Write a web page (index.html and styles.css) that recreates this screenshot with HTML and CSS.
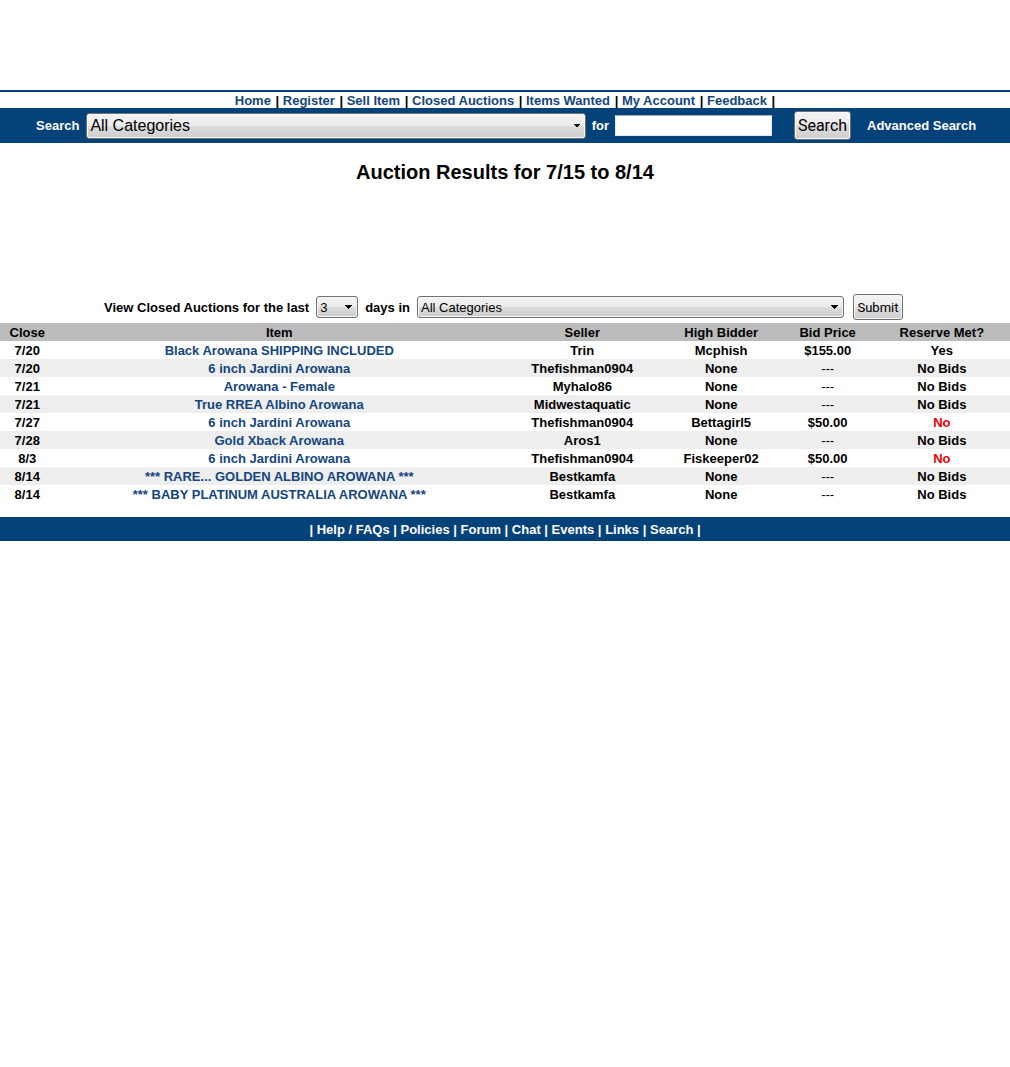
FILE: index.html
```html
<!DOCTYPE html>
<html lang="en">
<head>
<meta charset="utf-8">
<title>Auction Results</title>
<link rel="stylesheet" href="styles.css">
</head>
<body>
<header class="site-header">
  <nav class="top-nav">
    <a href="#">Home</a> | <a href="#">Register</a> | <a href="#">Sell Item</a> | <a href="#">Closed Auctions</a> | <a href="#">Items Wanted</a> | <a href="#">My Account</a> | <a href="#">Feedback</a> |
  </nav>
  <form class="search-bar">
    <label for="category">Search</label>
    <select id="category" class="control search-category"><option>All Categories</option></select>
    <label for="terms">for</label>
    <input id="terms" class="search-terms" type="text">
    <button class="control search-button" type="button">Search</button>
    <a class="advanced" href="#">Advanced Search</a>
  </form>
</header>
<main>
  <h1 class="title">Auction Results for 7/15 to 8/14</h1>
  <form class="filter">
    <label for="days">View Closed Auctions for the last</label>
    <select id="days" class="control filter-days"><option>3</option></select>
    <label for="closed-category">days in</label>
    <select id="closed-category" class="control filter-category"><option>All Categories</option></select>
    <button class="control filter-button" type="button">Submit</button>
  </form>
  <table class="results">
    <colgroup><col class="col-close"><col class="col-item"><col class="col-seller"><col class="col-bidder"><col class="col-price"><col class="col-reserve"></colgroup>
    <thead>
      <tr><th>Close</th><th>Item</th><th>Seller</th><th>High Bidder</th><th>Bid Price</th><th>Reserve Met?</th></tr>
    </thead>
    <tbody>
      <tr><td>7/20</td><td><a href="#">Black Arowana SHIPPING INCLUDED</a></td><td>Trin</td><td>Mcphish</td><td>$155.00</td><td>Yes</td></tr>
      <tr><td>7/20</td><td><a href="#">6 inch Jardini Arowana</a></td><td>Thefishman0904</td><td>None</td><td class="empty">---</td><td>No Bids</td></tr>
      <tr><td>7/21</td><td><a href="#">Arowana - Female</a></td><td>Myhalo86</td><td>None</td><td class="empty">---</td><td>No Bids</td></tr>
      <tr><td>7/21</td><td><a href="#">True RREA Albino Arowana</a></td><td>Midwestaquatic</td><td>None</td><td class="empty">---</td><td>No Bids</td></tr>
      <tr><td>7/27</td><td><a href="#">6 inch Jardini Arowana</a></td><td>Thefishman0904</td><td>Bettagirl5</td><td>$50.00</td><td class="unmet">No</td></tr>
      <tr><td>7/28</td><td><a href="#">Gold Xback Arowana</a></td><td>Aros1</td><td>None</td><td class="empty">---</td><td>No Bids</td></tr>
      <tr><td>8/3</td><td><a href="#">6 inch Jardini Arowana</a></td><td>Thefishman0904</td><td>Fiskeeper02</td><td>$50.00</td><td class="unmet">No</td></tr>
      <tr><td>8/14</td><td><a href="#">*** RARE... GOLDEN ALBINO AROWANA ***</a></td><td>Bestkamfa</td><td>None</td><td class="empty">---</td><td>No Bids</td></tr>
      <tr><td>8/14</td><td><a href="#">*** BABY PLATINUM AUSTRALIA AROWANA ***</a></td><td>Bestkamfa</td><td>None</td><td class="empty">---</td><td>No Bids</td></tr>
    </tbody>
  </table>
</main>
<footer class="site-footer">
  | <a href="#">Help / FAQs</a> | <a href="#">Policies</a> | <a href="#">Forum</a> | <a href="#">Chat</a> | <a href="#">Events</a> | <a href="#">Links</a> | <a href="#">Search</a> |
</footer>
</body>
</html>
```
FILE: styles.css
```css
* { box-sizing: border-box; }
body {
  margin: 0;
  padding-top: 90px;
  background: #fff;
  color: #000;
  font: bold 13px/18px "Liberation Sans", Arial, sans-serif;
}
a { color: #14457d; text-decoration: none; }

.top-nav {
  border-top: 2px solid #06427a;
  height: 18px;
  line-height: 17px;
  text-align: center;
}
.top-nav a { padding-right: 1px; }
.search-bar {
  display: flex;
  align-items: center;
  height: 35px;
  padding: 0 31px 0 36px;
  background: #06427a;
  color: #fff;
}
.control {
  border: 1px solid #707070;
  border-radius: 3px;
  background: linear-gradient(#f3f3f3, #ebebeb 50%, #dddddd 50%, #cdcdcd);
  box-shadow: inset 0 0 0 1px #f8f8f8;
  color: #000;
  font: 13px "Liberation Sans", Arial, sans-serif;
  padding: 0;
}
select.control {
  appearance: none;
  padding: 0 20px 0 3px;
  background:
    linear-gradient(to bottom right, #000 50%, transparent 50%) right 4px center / 4px 4px no-repeat,
    linear-gradient(to bottom left, #000 50%, transparent 50%) right 8px center / 4px 4px no-repeat,
    linear-gradient(#f3f3f3, #ebebeb 50%, #dddddd 50%, #cdcdcd);
}
.search-category.control {
  flex: 1;
  height: 26px;
  margin: 0 6px 0 7px;
  font-size: 16px;
}
.search-terms {
  width: 157px;
  height: 21px;
  margin: 0 22px 0 6px;
  padding: 1px 3px;
  border: 1px solid #e3e9ef;
  border-top-color: #abadb3;
  font: 16px "Liberation Sans", Arial, sans-serif;
}
.search-button.control {
  width: 57px;
  height: 29px;
  margin-right: 16px;
  font: 16px Roboto, sans-serif;
}
.advanced { min-width: 112px; color: #fff; }

.title {
  margin: 17px 0 0;
  font-size: 20px;
  line-height: 24px;
  text-align: center;
}
.filter {
  display: flex;
  justify-content: center;
  align-items: center;
  height: 32px;
  margin-top: 107px;
  padding-right: 3px;
}
.filter label { padding-top: 2px; }
.filter-days.control { width: 42px; height: 22px; margin: 0 7px; }
.filter-category.control { width: 427px; height: 22px; margin: 0 9px 0 7px; }
.filter-button.control {
  width: 50px;
  height: 26px;
  font-family: Roboto, sans-serif;
}

.results {
  width: 100%;
  table-layout: fixed;
  border-collapse: collapse;
  text-align: center;
}
.results th, .results td {
  height: 18px;
  padding: 2px 0 0;
  line-height: 16px;
}
.results thead tr { background: #bbb; }
.results tbody tr:nth-child(even) { background: #eee; }
.col-close { width: 5.4%; }
.col-item { width: 44.5%; }
.col-seller { width: 15.5%; }
.col-bidder { width: 12%; }
.col-price { width: 9.1%; }
.col-reserve { width: 13.5%; }
.results .empty { font-weight: normal; }
.unmet { color: #f00000; }

.site-footer {
  margin-top: 14px;
  padding-top: 2px;
  background: #06427a;
  color: #fff;
  line-height: 22px;
  text-align: center;
}
.site-footer a { color: #fff; }
```
